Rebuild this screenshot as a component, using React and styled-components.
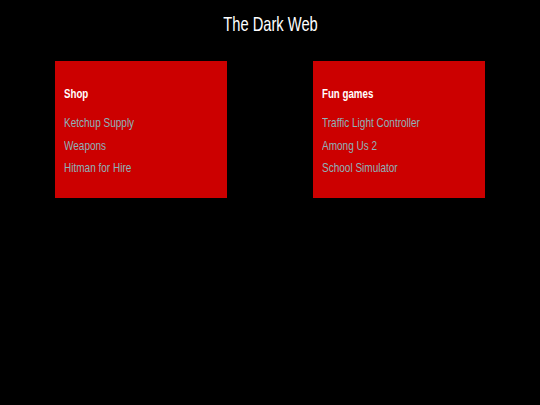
import styled, { createGlobalStyle } from "styled-components";

const Global = createGlobalStyle`
  html, body {
    margin: 0;
    background: #000;
    font-family: "Liberation Sans", Arial, sans-serif;
  }
`;

const Page = styled.div`
  width: 540px;
  min-height: 405px;
  background: #000;
  padding-top: 12px;
  box-sizing: border-box;
`;

const Title = styled.h1`
  margin: 0;
  text-align: center;
  color: #fff;
  font-weight: 400;
  font-size: 21px;
  line-height: 24px;
`;

// the reference uses a narrow face; squeeze the regular one to its widths
const Narrow = styled.span`
  display: inline-block;
  white-space: nowrap;
  transform: scaleX(${(p) => p.$x || 0.77});
  transform-origin: ${(p) => (p.$center ? "center" : "left")} center;
`;

const Grid = styled.div`
  display: flex;
  justify-content: space-between;
  padding: 25px 55px 0;
`;

const Card = styled.div`
  width: 172px;
  height: 137px;
  box-sizing: border-box;
  background: #cc0000;
  padding: 26px 9px 0;
`;

const Heading = styled.h2`
  margin: 0 0 14px;
  color: #fff;
  font-size: 12px;
  font-weight: 700;
  line-height: 14px;
`;

const List = styled.ul`
  list-style: none;
  margin: 0;
  padding: 0;
  display: flex;
  flex-direction: column;
  gap: 7.5px;
`;

const Item = styled.li`
  font-size: 13px;
  line-height: 15px;
`;

const Link = styled.a`
  color: #8db3ba;
  text-decoration: none;
`;

const sections = [
  { name: "Shop", links: ["Ketchup Supply", "Weapons", "Hitman for Hire"] },
  {
    name: "Fun games",
    links: ["Traffic Light Controller", "Among Us 2", "School Simulator"],
  },
];

export default function App() {
  return (
    <Page>
      <Global />
      <Title>
        <Narrow $x={0.7} $center>
          The Dark Web
        </Narrow>
      </Title>
      <Grid>
        {sections.map((s) => (
          <Card key={s.name}>
            <Heading>
              <Narrow $x={0.81}>{s.name}</Narrow>
            </Heading>
            <List>
              {s.links.map((l) => (
                <Item key={l}>
                  <Link href="#">
                    <Narrow>{l}</Narrow>
                  </Link>
                </Item>
              ))}
            </List>
          </Card>
        ))}
      </Grid>
    </Page>
  );
}
